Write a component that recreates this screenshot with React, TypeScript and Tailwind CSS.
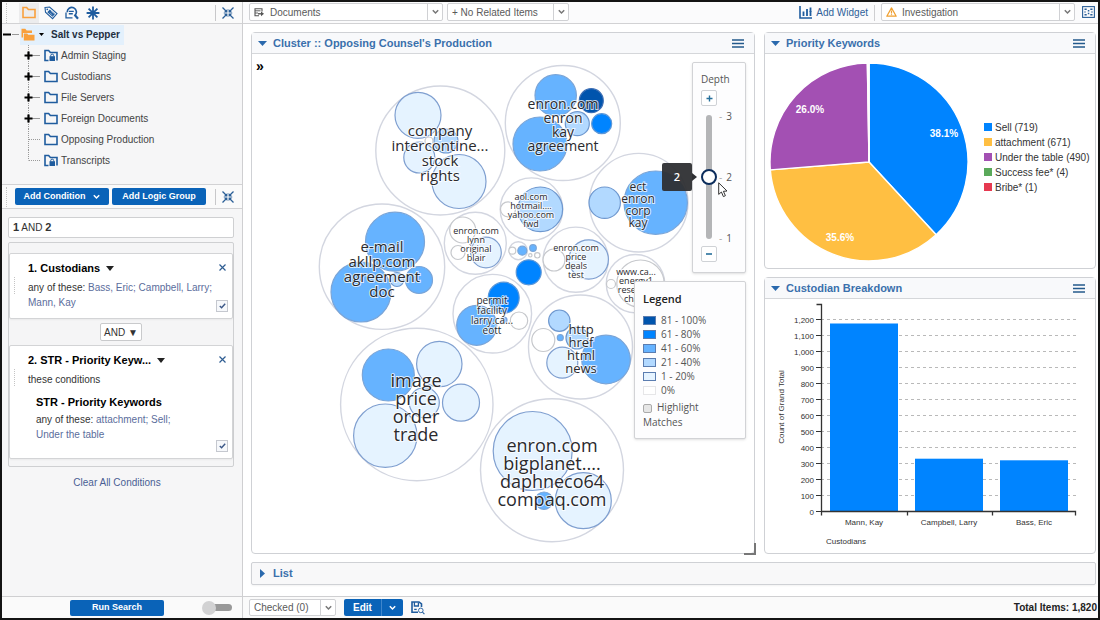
import { useState, type ReactNode } from 'react';

type Shade = 'darkest' | 'bright' | 'mid' | 'soft' | 'pale' | 'none';

const SHADES: Record<Shade, { fill: string; stroke: string }> = {
    darkest: { fill: '#0054ad', stroke: '#3d6fb5' },
    bright: { fill: '#0084ff', stroke: '#5c97d8' },
    mid: { fill: '#66b3ff', stroke: '#7aa5d8' },
    soft: { fill: '#b2d9ff', stroke: '#6f98cf' },
    pale: { fill: '#e5f3ff', stroke: '#7f9fd0' },
    none: { fill: '#ffffff', stroke: '#c6c8cc' },
};

interface Cluster {
    x: number;
    y: number;
    r: number;
    children: [number, number, number, Shade][];
    label?: { x: number; y: number; size: number; lines: string[] };
}

const CLUSTERS: Cluster[] = [
    {
        x: 440.3, y: 150.5, r: 64.5,
        children: [[418, 115.3, 23, 'pale'], [419.3, 157.5, 15.5, 'pale'], [446, 141, 12, 'soft'], [429, 141, 4, 'none'], [459, 181.5, 27, 'pale']],
        label: { x: 440, y: 136, size: 15, lines: ['company', 'intercontine...', 'stock', 'rights'] },
    },
    {
        x: 562.8, y: 123, r: 57.5,
        children: [[555.7, 95.3, 20.7, 'mid'], [591.3, 100.7, 12, 'darkest'], [601.7, 123.7, 10, 'bright'], [577.3, 123.7, 12, 'soft'], [540, 144, 27, 'mid']],
        label: { x: 563, y: 109, size: 14, lines: ['enron.com', 'enron', 'kay', 'agreement'] },
    },
    {
        x: 638.7, y: 202.7, r: 49.3,
        children: [[604.7, 202.7, 15.7, 'soft'], [655.7, 202.7, 31.7, 'mid']],
        label: { x: 638, y: 191, size: 12, lines: ['ect', 'enron', 'corp', 'kay'] },
    },
    {
        x: 531.5, y: 209.2, r: 31.3,
        children: [[540.3, 209.3, 22.3, 'soft'], [508, 209.3, 7.5, 'none']],
        label: { x: 531, y: 200, size: 9, lines: ['aol.com', 'hotmail....', 'yahoo.com', 'fwd'] },
    },
    {
        x: 475.3, y: 243.3, r: 31,
        children: [[462.7, 230, 13, 'none'], [458, 252.5, 7, 'none'], [486, 252.5, 15.3, 'pale']],
        label: { x: 476, y: 234, size: 9, lines: ['enron.com', 'lynn', 'original', 'blair'] },
    },
    {
        x: 518.3, y: 250.7, r: 9,
        children: [[512.3, 250.7, 3.5, 'none'], [522.3, 250.7, 4.5, 'mid'], [533, 248, 3.3, 'mid'], [530.3, 255.3, 1.7, 'none'], [537.3, 255.3, 2.7, 'none'], [528.7, 272.3, 12.5, 'bright']],
    },
    {
        x: 575.8, y: 259.7, r: 32.6,
        children: [[588.7, 259.5, 19.7, 'pale'], [554, 260, 11, 'none']],
        label: { x: 576, y: 251, size: 9, lines: ['enron.com', 'price', 'deals', 'test'] },
    },
    {
        x: 635.5, y: 283.7, r: 29.2,
        children: [[640.5, 283.7, 23.7, 'none'], [611, 284, 4.5, 'none']],
        label: { x: 636, y: 275, size: 9, lines: ['www.ca...', 'energy1', 'research', 'chase'] },
    },
    {
        x: 492.3, y: 313.7, r: 39.3,
        children: [[503.7, 297.7, 15.5, 'bright'], [476.7, 325.3, 20, 'mid'], [519, 320.7, 8.7, 'none'], [504, 320, 3, 'mid']],
        label: { x: 492, y: 304, size: 10, lines: ['permit', 'facility', 'larry.ca...', 'eott'] },
    },
    {
        x: 580.5, y: 347, r: 52,
        children: [[559.3, 320.7, 10.7, 'soft'], [543.3, 340, 11.5, 'none'], [560.3, 337.7, 3, 'mid'], [577, 338, 11, 'soft'], [562.3, 362.7, 15.5, 'pale'], [606, 359.5, 24.3, 'mid']],
        label: { x: 581, y: 334, size: 13, lines: ['http', 'href', 'html', 'news'] },
    },
    {
        x: 382, y: 266.7, r: 62.7,
        children: [[395, 241.7, 29.5, 'mid'], [361, 292, 30, 'mid'], [397, 279.5, 7, 'soft'], [419, 280, 13.5, 'mid']],
        label: { x: 382, y: 252, size: 15, lines: ['e-mail', 'akllp.com', 'agreement', 'doc'] },
    },
    {
        x: 416.8, y: 404.5, r: 76.2,
        children: [[388.3, 375, 26, 'mid'], [439.3, 364, 22.7, 'pale'], [461, 402.7, 18.5, 'pale'], [424.3, 402.7, 15, 'pale'], [385.3, 435.7, 31.7, 'pale']],
        label: { x: 416, y: 387, size: 18, lines: ['image', 'price', 'order', 'trade'] },
    },
    {
        x: 552, y: 470.2, r: 71.5,
        children: [[532.7, 451, 39.5, 'pale'], [583.3, 500.7, 28, 'pale'], [544, 500.7, 8.7, 'mid']],
        label: { x: 552, y: 452, size: 18, lines: ['enron.com', 'bigplanet....', 'daphneco64', 'compaq.com'] },
    },
];

const FOLDERS = [
    { name: 'Admin Staging', locked: true, expandable: true },
    { name: 'Custodians', locked: false, expandable: true },
    { name: 'File Servers', locked: false, expandable: true },
    { name: 'Foreign Documents', locked: false, expandable: true },
    { name: 'Opposing Production', locked: false, expandable: false },
    { name: 'Transcripts', locked: true, expandable: false },
];

const KEYWORDS = [
    { name: 'Sell', count: 719, color: '#0084ff', label: { text: '38.1%', x: 175, y: 75 } },
    { name: 'attachment', count: 671, color: '#ffbf42', label: { text: '35.6%', x: 71, y: 179 } },
    { name: 'Under the table', count: 490, color: '#a350b3', label: { text: '26.0%', x: 41, y: 51 } },
    { name: 'Success fee*', count: 4, color: '#5aa95a' },
    { name: 'Bribe*', count: 1, color: '#e63950' },
];

const CUSTODIANS = [
    { name: 'Mann, Kay', count: 1175 },
    { name: 'Campbell, Larry', count: 330 },
    { name: 'Bass, Eric', count: 320 },
];

const LEGEND: [string, Shade][] = [
    ['81 - 100%', 'darkest'],
    ['61 - 80%', 'bright'],
    ['41 - 60%', 'mid'],
    ['21 - 40%', 'soft'],
    ['1 - 20%', 'pale'],
    ['0%', 'none'],
];

/* ---------- icons ---------- */

function FolderIcon({ color = '#1f5c9e', locked = false }: { color?: string; locked?: boolean }) {
    return (
        <svg width="14" height="13" viewBox="0 0 14 13" fill="none">
            <path d={locked ? 'M4.5 11.5H1V1.5h3.6l1.8 2H13v8' : 'M1 11.5V1.5h3.6l1.8 2H13v8z'} stroke={color} strokeWidth="1.6" />
            {locked && (
                <>
                    <rect x="5.5" y="7.2" width="5.5" height="4.8" fill={color} />
                    <path d="M6.7 7.5V6.6a1.5 1.5 0 0 1 3 0v0.9" stroke={color} strokeWidth="1" />
                </>
            )}
        </svg>
    );
}

function OpenFoldersIcon() {
    return (
        <svg width="14" height="13" viewBox="0 0 14 13">
            <path d="M0.5 9.5V0.8h3.8l1.4 1.8h5.3V5H2v4.5z" fill="#f9a03c" />
            <path d="M2.8 12.5V5.6h3.4l1 1.2H13.500v5.7z" fill="#f9a03c" />
        </svg>
    );
}

function TagIcon() {
    return (
        <svg width="14" height="14" viewBox="0 0 14 14" fill="none" stroke="#1f5c9e">
            <path d="M1 1.5L5.6 1L13 7.500L8.600 12.600L1.500 6.200z" strokeWidth="1.1" />
            <path d="M5.800 3.400L11 7.900L8.600 10.800L3.300 6.200z" fill="#1f5c9e" stroke="none" />
            <path d="M5.600 6.600L8.400 9M6.900 5.200L9.700 7.600" stroke="#b8cce2" strokeWidth="0.6" />
            <circle cx="3.300" cy="3.300" r="0.900" fill="#1f5c9e" stroke="none" />
        </svg>
    );
}

function SavedSearchIcon() {
    return (
        <svg width="14" height="14" viewBox="0 0 14 14" fill="none" stroke="#1f5c9e">
            <path d="M7.500 11.800H1V6.500" strokeWidth="1.3" />
            <path d="M2.200 6.200a4.600 4.600 0 1 1 7.600 3.300" strokeWidth="1.600" />
            <path d="M9.600 8.800L13 12.800" strokeWidth="2.2" />
            <path d="M3.800 5.400h5M3.800 7.800h4" strokeWidth="1.4" />
        </svg>
    );
}

function AsteriskIcon() {
    return (
        <svg width="14" height="14" viewBox="0 0 14 14" stroke="#1f5c9e" strokeWidth="1.8">
            <path d="M7 0.6v12.800M0.6 7h12.800M2.600 2.600l8.800 8.800M11.400 2.600l-8.800 8.800" />
        </svg>
    );
}

function CollapseIcon() {
    return (
        <svg width="12" height="12" viewBox="0 0 12 12" fill="#2b5f97" stroke="#2b5f97" strokeWidth="1.3">
            <path d="M0.5 0.5L4 4M11.500 0.5L8 4M0.5 11.500L4 8M11.500 11.500L8 8" />
            <path d="M5.400 2V5.400H1.500zM6.600 2V5.400h3.900zM5.400 10V6.600H1.500zM6.600 10V6.600h3.900z" stroke="none" />
        </svg>
    );
}

function ChevronIcon({ color = '#777' }: { color?: string }) {
    return (
        <svg width="7" height="6" viewBox="0 0 7 6" fill="none" stroke={color} strokeWidth="1.5">
            <path d="M0.8 1.2L3.5 4L6.2 1.2" />
        </svg>
    );
}

function DocumentsIcon() {
    return (
        <svg width="10" height="9" viewBox="0 0 10 9" fill="none" stroke="#555">
            <path d="M8 3.500V0.8H1v7h4" strokeWidth="1.100" />
            <path d="M1 2.800h5.500M1 5h3" strokeWidth="0.900" />
            <path d="M4 5.800H8" strokeWidth="1.400" />
            <path d="M7 3.500L10 5.800L7 8.200z" fill="#555" stroke="none" />
        </svg>
    );
}

function WidgetIcon() {
    return (
        <svg width="13" height="13" viewBox="0 0 13 13" fill="none" stroke="#1f5c9e">
            <path d="M1 0v12h12" strokeWidth="1.6" />
            <path d="M4.500 10V5.500M8 10V3M11.500 10V5" strokeWidth="1.8" />
            <path d="M11.500 6V1.500" strokeWidth="1.8" />
        </svg>
    );
}

function WarningIcon() {
    return (
        <svg width="11" height="10" viewBox="0 0 11 10" fill="none" stroke="#f0a030">
            <path d="M5.5 0.9L10.2 9.2H0.8z" strokeWidth="1.2" strokeLinejoin="round" />
            <path d="M5.5 3.4v3M5.5 7.2v1.1" strokeWidth="1.2" />
        </svg>
    );
}

function DashboardIcon() {
    return (
        <svg width="13" height="12" viewBox="0 0 13 12" fill="none" stroke="#2b5f97">
            <rect x="0.6" y="0.6" width="11.800" height="10.800" strokeWidth="1.1" />
            <path d="M2.500 3.200h2.200M8.300 3.200h2.200M2.500 8.800h2.200M8.300 8.800h2.200M5.800 4.700h1.500M5.800 7.500h1.500M2.500 6h1M9.500 6h1" strokeWidth="1.600" />
        </svg>
    );
}

function PreviewIcon() {
    return (
        <svg width="14" height="14" viewBox="0 0 14 14" fill="none" stroke="#1f5c9e">
            <path d="M7 11.2H1V1h7l2.500 2v3" strokeWidth="1.6" />
            <path d="M3.400 1v4h4V1.500" strokeWidth="1.300" />
            <path d="M3.200 8.400h2.500" strokeWidth="1.300" />
            <circle cx="9.800" cy="9.400" r="2.300" strokeWidth="0.900" />
            <path d="M11.400 11l2 2.200" strokeWidth="1.100" />
        </svg>
    );
}

function Grip() {
    return <span className="h-5 w-px border-l border-dotted border-[#c4c4c4]" />;
}

/* ---------- shared controls ---------- */

function Picker({ label, options, icon, className }: { label: string; options: string[]; icon?: ReactNode; className: string }) {
    return (
        <div className={`flex items-center rounded-xs border border-[#d0d1d4] bg-white ${className}`}>
            {icon}
            <select aria-label={label} className="h-full min-w-0 flex-1 appearance-none bg-transparent px-1 text-[10px] text-[#5a5a5a] outline-none">
                {options.map((option) => (
                    <option key={option}>{option}</option>
                ))}
            </select>
            <span className="pointer-events-none flex h-full w-[15px] items-center justify-center border-l border-[#d0d1d4]">
                <ChevronIcon />
            </span>
        </div>
    );
}

function Panel({ title, children, className = '' }: { title: string; children: ReactNode; className?: string }) {
    return (
        <section className={`flex flex-col rounded-sm border border-[#cfd1d5] bg-white ${className}`}>
            <header className="flex h-[21px] items-center gap-1.5 border-b border-[#d5d7da] bg-[#f8f9fb] pr-2.5 pl-1.5">
                <svg width="9" height="5" viewBox="0 0 9 5" fill="#2a69ad">
                    <path d="M0 0h9L4.5 5z" />
                </svg>
                <h2 className="flex-1 text-[11px] font-bold text-[#3a70ac]">{title}</h2>
                <button aria-label={`${title} menu`}>
                    <svg width="12" height="9" viewBox="0 0 12 9" stroke="#235a8c" strokeWidth="1.600">
                        <path d="M0 1h12M0 4.500h12M0 8h12" />
                    </svg>
                </button>
            </header>
            {children}
        </section>
    );
}

/* ---------- sidebar ---------- */

function FolderTree() {
    return (
        <div className="flex-none pb-[13px] text-[10px] text-[#444]">
            <div className="flex h-[21px] items-center">
                <svg width="18" height="21" viewBox="0 0 18 21">
                    <path d="M1 10.5h8" stroke="#000" strokeWidth="2" />
                    <path d="M10 10.5h7" stroke="#999" />
                </svg>
                <a href="#" className="flex h-5 items-center bg-[#e3f0fc] pr-1 pl-px font-bold text-[#1f2f40]">
                    <OpenFoldersIcon />
                    <svg width="5" height="3" viewBox="0 0 5 3" className="mr-[7px] ml-1">
                        <path d="M0 0h5L2.5 3z" />
                    </svg>
                    Salt vs Pepper
                </a>
            </div>
            <ul>
                {FOLDERS.map((folder, i) => (
                    <li key={folder.name} className="flex h-[21px] items-center pl-5">
                        <svg width="22" height="21" viewBox="0 0 22 21">
                            <path d={i === FOLDERS.length - 1 ? 'M6.5 0V10.5' : 'M6.5 0V21'} stroke="#999" strokeDasharray="1 1" />
                            <path d="M7 10.5h11" stroke="#999" strokeDasharray={folder.expandable ? undefined : '1 1'} />
                            {folder.expandable && <path d="M2.5 10.5h8M6.5 6.5v8" stroke="#000" strokeWidth="2.2" />}
                        </svg>
                        <FolderIcon locked={folder.locked} />
                        <a href="#" className="ml-[3px]">{folder.name}</a>
                    </li>
                ))}
            </ul>
        </div>
    );
}

function Condition({ title, children }: { title: string; children: ReactNode }) {
    return (
        <article className="flex rounded-xs border border-[#d3d4d6] bg-white pl-1 shadow-xs">
            <span className="mt-5 h-5">
                <Grip />
            </span>
            <div className="flex-1 pt-1.5 pl-[13px] text-[10px] leading-[15px] text-[#333]">
                <h3 className="flex h-4 items-center gap-1.5 text-[11px] font-bold text-black">
                    {title}
                    <svg width="8" height="5" viewBox="0 0 8 5" fill="#222">
                        <path d="M0 0h8L4 5z" />
                    </svg>
                </h3>
                {children}
            </div>
            <div className="flex flex-col items-center justify-between pt-2.5 pr-1 pb-1.5">
                <button aria-label="Remove condition">
                    <svg width="7" height="7" viewBox="0 0 7 7" stroke="#2f5d92" strokeWidth="1.2">
                        <path d="M0.5 0.5l6 6M6.5 0.5l-6 6" />
                    </svg>
                </button>
                <label className="flex size-3 items-center justify-center border border-[#c5c8cf] bg-[#f6f8fb]">
                    <input type="checkbox" defaultChecked className="peer sr-only" aria-label={`Use ${title}`} />
                    <svg width="7" height="6" viewBox="0 0 7 6" fill="none" stroke="#3a5686" strokeWidth="1.400" className="invisible peer-checked:visible">
                        <path d="M0.800 3L2.600 4.800L6.200 0.800" />
                    </svg>
                </label>
            </div>
        </article>
    );
}

function Sidebar() {
    return (
        <aside className="flex w-[241px] flex-none flex-col border-r border-[#cfcfd1] bg-[#f6f6f7]">
            <div className="flex h-[22px] items-center border-b border-[#d2d2d4] bg-[#fafafa] pr-2 pl-1">
                <Grip />
                <button aria-label="Folders" className="ml-3 flex h-5 w-5 items-center justify-center bg-[#ececed]">
                    <FolderIcon color="#f9a03c" />
                </button>
                <button aria-label="Tags" className="ml-[5px]"><TagIcon /></button>
                <button aria-label="Saved searches" className="ml-[7px]"><SavedSearchIcon /></button>
                <button aria-label="Favorites" className="ml-[7px]"><AsteriskIcon /></button>
                <span className="ml-auto h-4 w-px bg-[#c8c8ca]" />
                <button aria-label="Collapse browser" className="ml-1.5"><CollapseIcon /></button>
            </div>

            <FolderTree />

            <div className="flex h-[25px] flex-none items-center gap-[3px] border-y border-[#d2d2d4] bg-[#fafafa] pr-2 pl-1">
                <Grip />
                <button className="ml-[5px] flex h-[17px] w-[94px] items-center justify-center gap-2 rounded-xs bg-[#0a63b8] text-[9px] font-bold text-white">
                    Add Condition
                    <ChevronIcon color="#fff" />
                </button>
                <button className="h-[17px] w-[94px] rounded-xs bg-[#0a63b8] text-[9px] font-bold text-white">Add Logic Group</button>
                <span className="ml-auto h-4 w-px bg-[#c8c8ca]" />
                <button aria-label="Collapse search" className="ml-[3px]"><CollapseIcon /></button>
            </div>

            <div className="flex flex-1 flex-col px-2 pt-2 pl-1.5">
                <div className="h-[21px] rounded-xs border border-[#cfd0d2] bg-white px-1 text-[10px] leading-[19px] text-[#333]">
                    <b className="text-[11px]">1</b> AND <b className="text-[11px]">2</b>
                </div>
                <div className="mt-1 flex flex-col gap-1 rounded-xs border border-[#cfd0d2] bg-[#f5f5f6] pt-2.5 pb-[7px]">
                    <Condition title="1. Custodians">
                        <p className="mt-1 pb-2">
                            any of these: <span className="text-[#5b6d9c]">Bass, Eric; Campbell, Larry; Mann, Kay</span>
                        </p>
                    </Condition>
                    <select aria-label="Operator" className="h-[18px] w-[42px] appearance-none self-center rounded-xs border border-[#c9cacc] bg-white text-center text-[10px] text-[#333]">
                        <option>AND ▼</option>
                        <option>OR ▼</option>
                    </select>
                    <Condition title="2. STR - Priority Keyw...">
                        <p className="mt-1">these conditions</p>
                        <div className="mt-[7px] pr-6 pb-4 pl-2">
                            <h4 className="-mr-6 text-[11px] leading-4 font-bold text-black">STR - Priority Keywords</h4>
                            <p className="mt-0.5">
                                any of these: <span className="text-[#5b6d9c]">attachment; Sell; Under the table</span>
                            </p>
                        </div>
                    </Condition>
                </div>
                <button className="mt-2 pr-2 text-[10px] leading-4 text-[#4a5f94]">Clear All Conditions</button>
            </div>

            <footer className="flex h-[22px] items-center border-t border-[#cfcfd1] bg-[#fafafa] pr-2.5">
                <span className="flex-1" />
                <button className="h-4 w-[94px] rounded-xs bg-[#0a63b8] text-[9px] font-bold text-white">Run Search</button>
                <label className="flex flex-1 items-center justify-end" aria-label="Auto-run search">
                    <input type="checkbox" role="switch" className="sr-only" />
                    <span className="z-10 size-[14px] rounded-full bg-[#d2d2d3]" />
                    <span className="-ml-1 h-[7px] w-5 rounded-full bg-[#999]" />
                </label>
            </footer>
        </aside>
    );
}

/* ---------- cluster widget ---------- */

function ClusterMap() {
    return (
        <svg viewBox="252 54 502 499" className="w-full flex-1" fontFamily="'Open Sans', 'Noto Sans', sans-serif" textAnchor="middle">
            {CLUSTERS.map((cluster) => (
                <g key={`${cluster.x}-${cluster.y}`}>
                    <circle cx={cluster.x} cy={cluster.y} r={cluster.r} fill="#fff" stroke="#d3d6e0" strokeWidth="1.4" />
                    {cluster.children.map(([x, y, r, shade]) => (
                        <circle key={`${x}-${y}`} cx={x} cy={y} r={r} fill={SHADES[shade].fill} stroke={SHADES[shade].stroke} strokeWidth="1.2" />
                    ))}
                </g>
            ))}
            {CLUSTERS.map(({ label }) =>
                label && (
                    <text
                        key={label.lines.join()}
                        y={label.y}
                        fontSize={label.size}
                        fill="#2a2a2e"
                        stroke="#fff"
                        strokeOpacity="0.75"
                        strokeWidth="2"
                        paintOrder="stroke"
                    >
                        {label.lines.map((line, i) => (
                            <tspan key={line} x={label.x} dy={i === 0 ? 0 : label.size}>{line}</tspan>
                        ))}
                    </text>
                )
            )}
        </svg>
    );
}

function DepthControl() {
    const [depth, setDepth] = useState(2);

    return (
        <div className="flex w-[54px] flex-col items-start rounded-xs border border-[#d2d3d6] bg-[#fdfdfe] pt-2 pb-2.5 pl-2 text-[10px] text-[#555] shadow-sm">
            <span className="leading-4">Depth</span>
            <button
                aria-label="Increase depth"
                onClick={() => setDepth(Math.min(3, depth + 1))}
                className="mt-[3px] flex size-4 items-center justify-center rounded-xs border border-[#cfd2d6] bg-white"
            >
                <svg width="7" height="7" viewBox="0 0 7 7" stroke="#27709c" strokeWidth="1.4"><path d="M0.5 3.5h6M3.5 0.5v6" /></svg>
            </button>
            <div className="relative mt-[3px] flex h-[136px] items-center">
                <input
                    type="range"
                    aria-label="Depth"
                    min={1}
                    max={3}
                    value={depth}
                    onChange={(e) => setDepth(Number(e.target.value))}
                    className="h-[124px] w-4 appearance-none bg-transparent [direction:rtl] [writing-mode:vertical-lr] [&::-webkit-slider-runnable-track]:w-1.5 [&::-webkit-slider-runnable-track]:rounded-full [&::-webkit-slider-runnable-track]:bg-[#b4b5b7] [&::-webkit-slider-thumb]:-ml-[5px] [&::-webkit-slider-thumb]:size-4 [&::-webkit-slider-thumb]:appearance-none [&::-webkit-slider-thumb]:rounded-full [&::-webkit-slider-thumb]:border-2 [&::-webkit-slider-thumb]:border-[#0c2d5c] [&::-webkit-slider-thumb]:bg-white"
                />
                <div className="ml-0.5 flex h-full flex-col justify-between leading-[14px]">
                    <span><span className="mr-1 text-[#aaa]">-</span>3</span>
                    <span><span className="mr-1 text-[#aaa]">-</span>2</span>
                    <span><span className="mr-1 text-[#aaa]">-</span>1</span>
                </div>
                <div className="absolute top-1/2 right-full mr-1 flex -translate-y-1/2 items-center">
                    <span className="flex h-7 w-[30px] items-center justify-center rounded-xs bg-[#2e2f33]/95 text-[11px] font-semibold text-white">{depth}</span>
                    <svg width="5" height="8" viewBox="0 0 5 8" fill="#2e2f33"><path d="M0 0l5 4L0 8z" /></svg>
                </div>
                <svg width="10" height="16" viewBox="0 0 10 16" className="absolute top-[73px] left-[17px]" fill="#fff" stroke="#333" strokeWidth="1">
                    <path d="M0.7 0.8v11.6l2.7-2.4l2 4.6l2-0.9l-2-4.4l3.6-0.3z" />
                </svg>
            </div>
            <button
                aria-label="Decrease depth"
                onClick={() => setDepth(Math.max(1, depth - 1))}
                className="mt-px flex size-4 items-center justify-center rounded-xs border border-[#cfd2d6] bg-white"
            >
                <svg width="6" height="2" viewBox="0 0 6 2" stroke="#27709c" strokeWidth="1.6"><path d="M0 1h6" /></svg>
            </button>
        </div>
    );
}

function ClusterLegend() {
    return (
        <div className="w-28 rounded-xs border border-[#d2d3d6] bg-[#fdfdfe] pt-[7px] pr-6 pb-2 pl-2 text-[10px] text-[#555] shadow-sm">
            <h3 className="text-[11px] leading-5 font-semibold text-[#222]">Legend</h3>
            <ul className="mt-1 leading-[14px]">
                {LEGEND.map(([label, shade]) => (
                    <li key={label} className="flex items-center gap-[5px]">
                        <svg width="13" height="9" viewBox="0 0 13 9">
                            <rect
                                x="0.5"
                                y="0.5"
                                width="12"
                                height="8"
                                fill={SHADES[shade].fill}
                                stroke={shade === 'none' ? '#e6e6e8' : '#5b7db0'}
                            />
                        </svg>
                        {label}
                    </li>
                ))}
            </ul>
            <label className="mt-[3px] block leading-[15px]">
                <input type="checkbox" className="mr-[5px] size-[9px] appearance-none rounded-xs border border-[#aaa] bg-[#e6e6e6] align-middle" />
                Highlight Matches
            </label>
        </div>
    );
}

/* ---------- charts ---------- */

function PieChart() {
    const total = KEYWORDS.reduce((sum, k) => sum + k.count, 0);
    const point = (share: number) => {
        const angle = share * 2 * Math.PI;
        return `${100 + 99 * Math.sin(angle)} ${100 - 99 * Math.cos(angle)}`;
    };
    let seen = 0;

    return (
        <div className="flex items-center pt-2 pb-1.5 pl-1">
            <svg width="200" height="200" viewBox="0 0 200 200" className="flex-none" fontSize="10" fontWeight="bold" textAnchor="middle">
                {KEYWORDS.map((k) => {
                    const from = seen / total;
                    seen += k.count;
                    return (
                        <path
                            key={k.name}
                            d={`M100 100L${point(from)}A99 99 0 0 1 ${point(seen / total)}z`}
                            fill={k.color}
                            stroke="#fff"
                            strokeWidth="1.4"
                        />
                    );
                })}
                {KEYWORDS.map((k) => k.label && (
                    <text key={k.name} x={k.label.x} y={k.label.y} fill="#fff">{k.label.text}</text>
                ))}
            </svg>
            <ul className="pb-[10px] pl-[15px] text-[10px] leading-[15px] whitespace-nowrap text-[#333]">
                {KEYWORDS.map((k) => (
                    <li key={k.name} className="flex items-center gap-[3px]">
                        <span className="size-2" style={{ backgroundColor: k.color }} />
                        {k.name} ({k.count})
                    </li>
                ))}
            </ul>
        </div>
    );
}

function BarChart() {
    const ticks = Array.from({ length: 13 }, (_, i) => i * 100);
    const base = 212.5;
    const yOf = (value: number) => base - value * 0.16;

    return (
        <svg viewBox="0 0 330 254" className="w-full flex-1" fontSize="8" fill="#333">
            <text transform="translate(19 108) rotate(-90)" textAnchor="middle">Count of Grand Total</text>
            {ticks.map((tick) => (
                <g key={tick}>
                    {tick > 0 && <path d={`M56 ${yOf(tick)}H311`} stroke="#b9b9b9" strokeDasharray="3 3" />}
                    <path d={`M51 ${yOf(tick)}h5`} stroke="#333" />
                    <text x="49" y={yOf(tick) + 3} textAnchor="end">{tick.toLocaleString('en-US')}</text>
                </g>
            ))}
            {CUSTODIANS.map((c, i) => (
                <g key={c.name}>
                    <rect x={65 + i * 85} y={yOf(c.count)} width="68" height={base - yOf(c.count)} fill="#0084ff" />
                    <text x={99 + i * 85} y={225.5} textAnchor="middle">{c.name}</text>
                </g>
            ))}
            <path d={`M51.5 5.5h5V${base}H310.5v4M56.5 ${base}v4M142.5 ${base}v4M227.5 ${base}v4`} fill="none" stroke="#333" strokeWidth="1.3" />
            <text x="61" y="245">Custodians</text>
        </svg>
    );
}

/* ---------- page ---------- */

export default function App() {
    return (
        <div className="flex min-h-screen border-2 border-[#141414] bg-white font-['Liberation_Sans',Arial,sans-serif] text-[#333]">
            <Sidebar />

            <div className="flex min-w-0 flex-1 flex-col">
                <div className="flex h-[22px] items-start border-b border-[#d2d2d4] bg-[#fbfbfc] pt-px pr-[3px] pl-1.5">
                    <Picker
                        label="Item type"
                        options={['Documents']}
                        className="h-[18px] w-[194px] pl-1"
                        icon={<span className="mr-0.5"><DocumentsIcon /></span>}
                    />
                    <Picker label="Related items" options={['+ No Related Items']} className="ml-1 h-[18px] w-[122px]" />
                    <button className="ml-auto flex h-[18px] items-center gap-1 text-[10px] text-[#2f5f99]">
                        <WidgetIcon />
                        Add Widget
                    </button>
                    <span className="mx-1.5 mt-0.5 h-4 w-px bg-[#cfcfd1]" />
                    <Picker
                        label="Dashboard"
                        options={['Investigation']}
                        className="h-[18px] w-[194px] pl-1"
                        icon={<span className="mr-px"><WarningIcon /></span>}
                    />
                    <button aria-label="Dashboard layout" className="ml-[7px] flex h-[18px] items-center"><DashboardIcon /></button>
                </div>

                <main className="flex flex-1 flex-col gap-2 pt-2 pr-0.5 pb-[11px] pl-2">
                    <div className="grid flex-1 grid-cols-[minmax(0,504fr)_minmax(0,332fr)] gap-[9px]">
                        <Panel title="Cluster :: Opposing Counsel's Production">
                            <div className="relative flex flex-1">
                                <ClusterMap />
                                <button aria-label="Expand" className="absolute top-1 left-1 text-[14px] leading-4 font-bold text-black">»</button>
                                <div className="absolute top-2 right-2 flex flex-col items-end gap-2 font-['Open_Sans','Noto_Sans',sans-serif]">
                                    <DepthControl />
                                    <ClusterLegend />
                                </div>
                                <span className="absolute -right-0.5 -bottom-0.5 size-3 border-r-2 border-b-2 border-[#777]" />
                            </div>
                        </Panel>
                        <div className="flex flex-col gap-2">
                            <Panel title="Priority Keywords">
                                <PieChart />
                            </Panel>
                            <Panel title="Custodian Breakdown" className="flex-1">
                                <BarChart />
                            </Panel>
                        </div>
                    </div>

                    <section className="flex h-[23px] flex-none items-center gap-2 rounded-xs border border-[#cfd1d5] bg-[#f8f8f9] pl-2 shadow-xs">
                        <svg width="5" height="9" viewBox="0 0 5 9" fill="#2a69ad">
                            <path d="M0 0v9l5-4.5z" />
                        </svg>
                        <h2 className="text-[11px] font-bold text-[#3a70ac]">List</h2>
                    </section>
                </main>

                <footer className="flex h-[22px] items-center border-t border-[#cfcfd1] bg-[#fafafa] pl-1.5">
                    <Picker label="Selection" options={['Checked (0)']} className="h-[17px] w-[87px]" />
                    <div className="ml-2 flex h-[17px] w-[59px] rounded-xs bg-[#0a63b8] text-[10px] font-bold text-white">
                        <button className="flex-1">Edit</button>
                        <button aria-label="More edit actions" className="flex w-[22px] items-center justify-center border-l border-[#3f86cc]">
                            <ChevronIcon color="#fff" />
                        </button>
                    </div>
                    <button aria-label="Preview" className="ml-2"><PreviewIcon /></button>
                    <span className="ml-auto pr-px text-[10px] font-bold text-[#222]">Total Items: 1,820</span>
                </footer>
            </div>
        </div>
    );
}
